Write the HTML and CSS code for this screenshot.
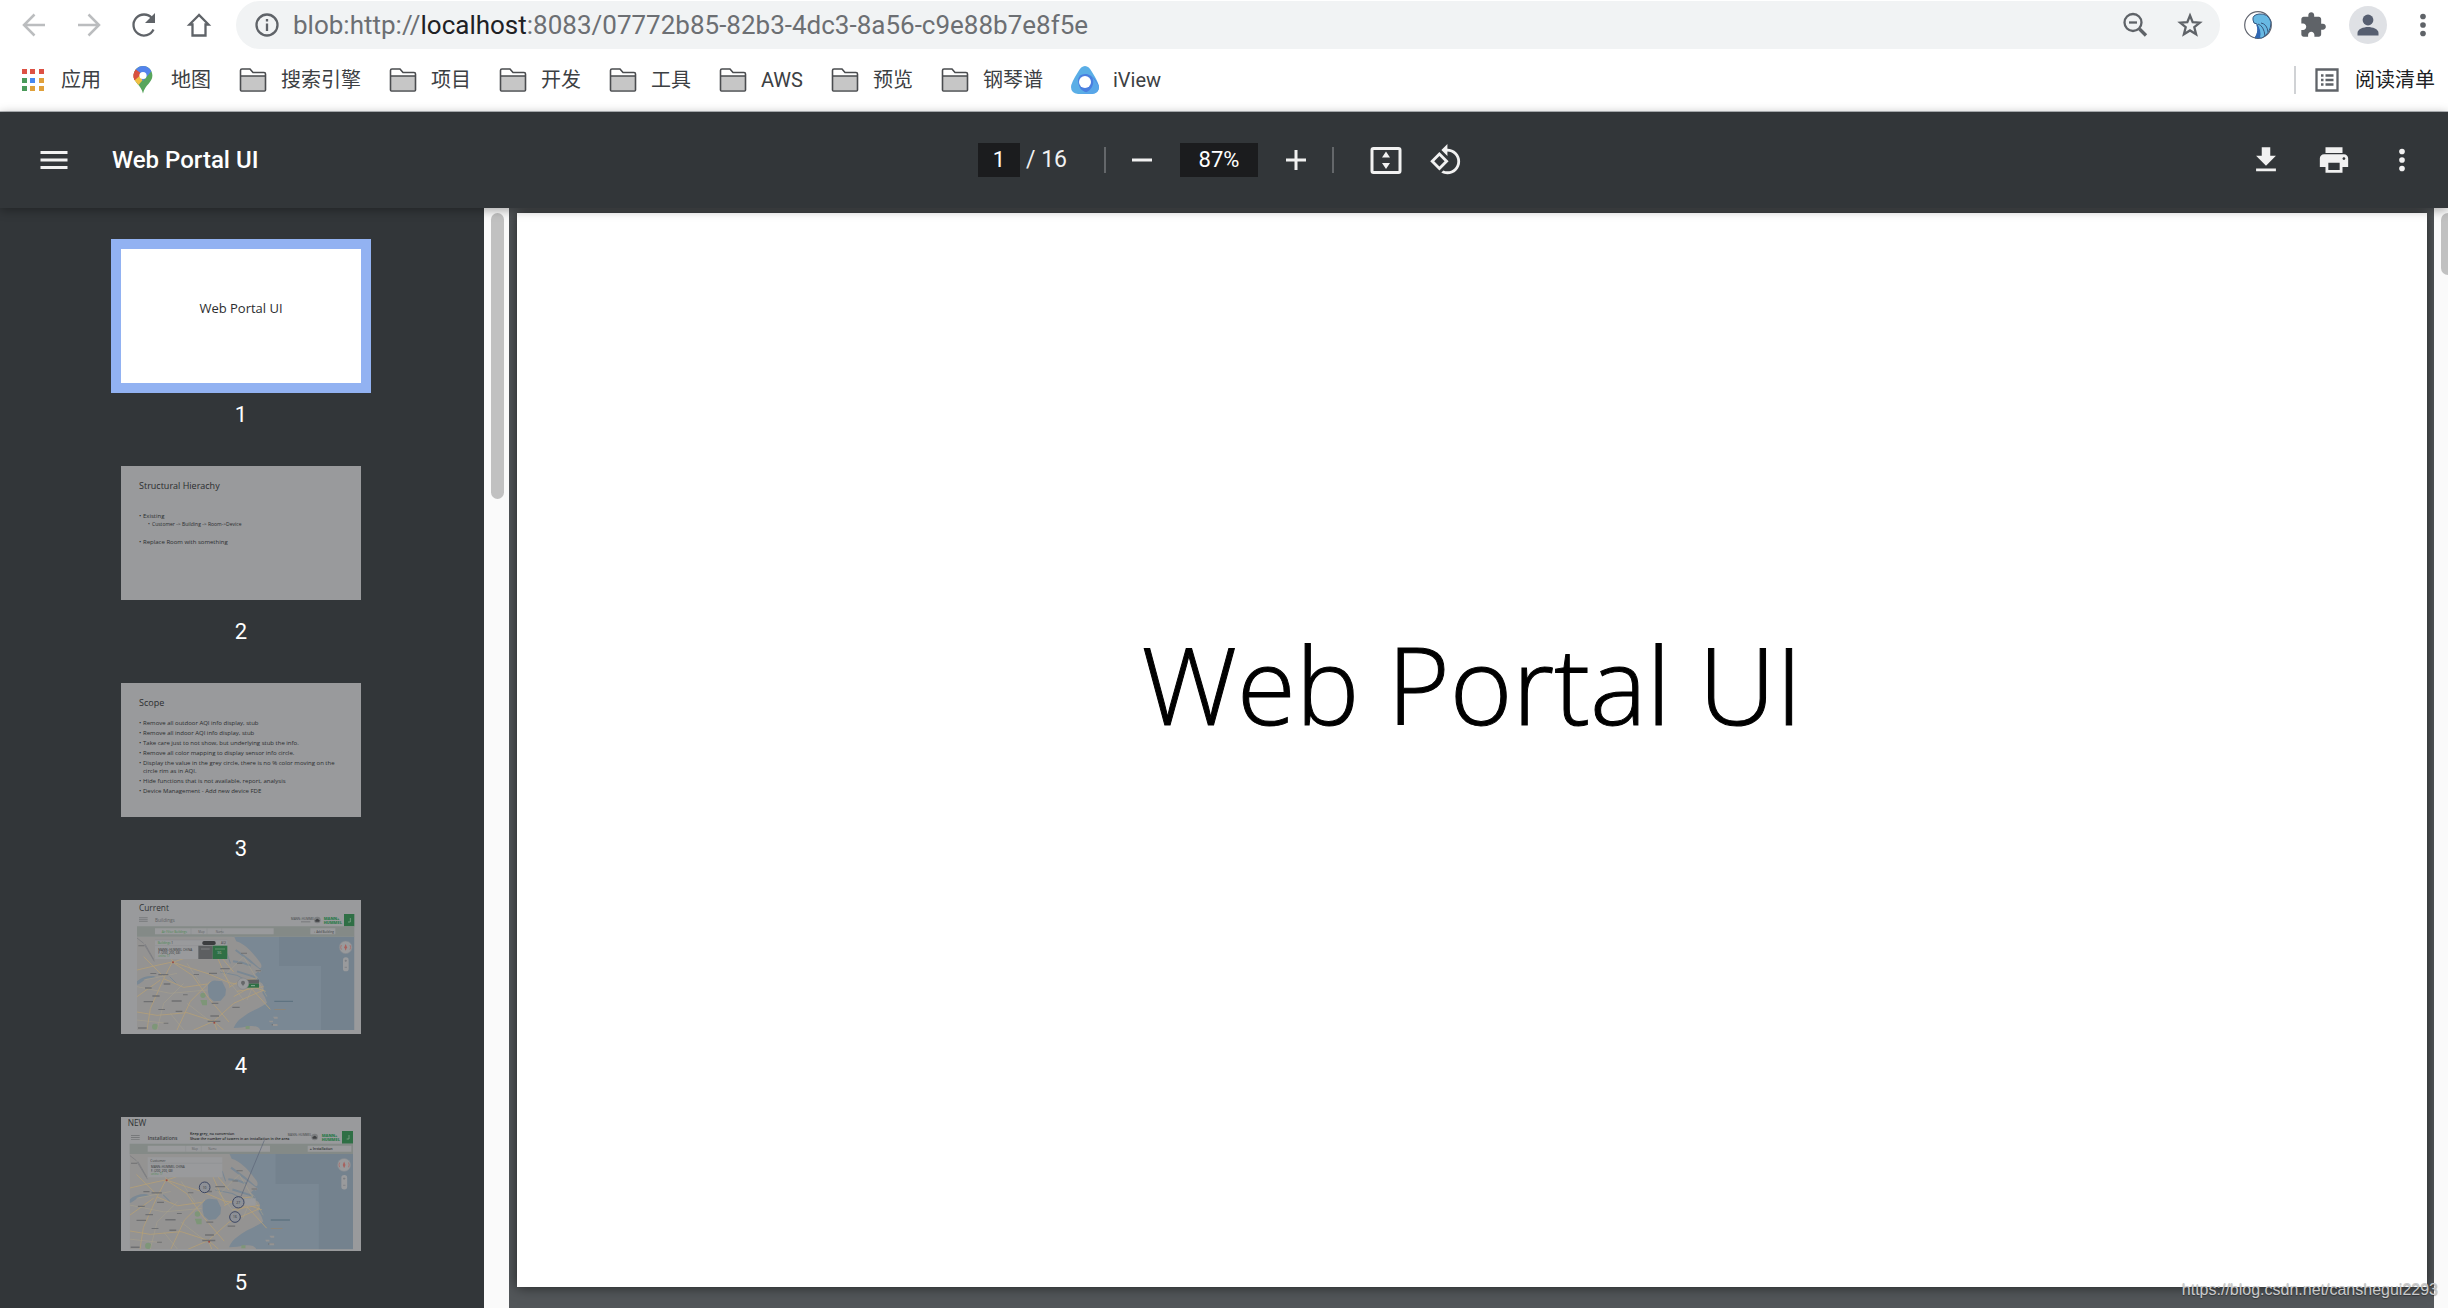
FILE: index.html
```html
<!DOCTYPE html>
<html lang="zh-CN">
<head>
<meta charset="utf-8">
<title>Web Portal UI</title>
<link rel="stylesheet" href="styles.css">
</head>
<body>
<svg class="defs" aria-hidden="true">
  <defs>
    <symbol id="folder" viewBox="0 0 28 28">
      <path d="M1.500 24V4.500q0-1.500 1.500-1.500H11l3 3.500H25q1.500 0 1.500 1.500V24q0 1-1 1h-23q-1 0-1-1z" fill="#fff"/>
      <path d="M2 10h24v14H2z" fill="#c6c6c6"/>
      <path d="M1.500 24V4.500q0-1.500 1.500-1.500H11l3 3.500H25q1.500 0 1.500 1.500V24q0 1-1 1h-23q-1 0-1-1zM1.500 10h25" fill="none" stroke="#4a4c4f" stroke-width="1.600"/>
    </symbol>
    <symbol id="dots" viewBox="0 0 24 24">
      <circle cx="12" cy="6" r="2"/><circle cx="12" cy="12" r="2"/><circle cx="12" cy="18" r="2"/>
    </symbol>
    <!-- Map of the Shanghai area used on several slides -->
    <symbol id="map" viewBox="0 0 652 280" preserveAspectRatio="none">
      <rect width="652" height="280" fill="#949392"/>
      <path d="M285 0H652V280H370q-6-14-30-12-28 6-50 6 8-20 24-30 20-16 34-22 30-14 42-24-6-20-14-30 10-16-4-34l-18-22q10-6 14-14 10-8 2-20-20-26-32-38-20-20-40-26-8-16-13-34z" fill="#7a8894"/>
      <path d="M552 88V280H652V0H426v88z" fill="#74828e"/>
      <path d="M213 146q10-18 26-14l16 2 6 12 6 12-2 18-14 16-20 2-14-12-4-16z" fill="#7a8894"/>
      <path d="M0 134q20-18 50-16l8 4-30 4-22 16-6 2z" fill="#7a8894"/>
      <path d="M376 100l-60-22-28-4M390 146l-40-26-50-16M296 40l40 30 40 36" fill="none" stroke="#7a8894" stroke-width="6"/>
      <path d="M250 106l50 10 30 16 46 2M98 120l20 20M270 50l10 30" fill="none" stroke="#7a8894" stroke-width="3"/>
      <path d="M344 80l30 22-6 6-28-18z" fill="#949392"/>
      <g fill="#7e9678">
        <circle cx="198" cy="176" r="8"/><circle cx="54" cy="270" r="9"/><path d="M190 190h20v16h-14zM326 268h12v9h-12z"/>
      </g>
      <g fill="none" stroke="#b39f78" stroke-width="2.500">
        <path d="M0 100l60-14 46-10 60 20 50 16 60 26 70 12 40 14M106 76l-26 50-40 90-10 64M106 76l60 40 50 70 60 70M0 226l60 10 90-8 80 26 60-54 90-40M80 126l60 26 70-10M170 280l60-26 10 26M276 152l34-20 46-6M340 152l60 66M300 164l80-14M290 180l60-34M60 10l50 66 70-24 60-6 50 60M0 180l70-50M120 280l40-86 60-60M230 254l30 26M20 60l60 60M240 60l40 90"/>
      </g>
      <g fill="none" stroke="#aaa28c" stroke-width="1.500">
        <path d="M0 150l100 20 110-10M60 280l20-80 60-60M150 200l70 54M20 130l100-20M260 120l60-60M320 60l70 120M100 230l40 50M0 250l90 10M250 100l70 90M330 190l30-70M150 80l40 60"/>
      </g>
      <path d="M0 4l20 16M24 22l26 46M22 24l30 50" stroke="#77797e" stroke-width="2" fill="none"/>
      <g fill="#6f7072">
        <path d="M4 26h18v3H4zM40 109h18v3H40zM64 112h30v4H64zM80 140h20v4H80zM24 152h20v4H24zM46 176h22v4H46zM20 193h28v4H20zM104 191h30v4h-30zM138 173h14v3h-14zM64 217h20v3H64zM116 222h20v4h-20zM80 258h14v3H80zM170 112h16v3h-16zM250 94h28v4h-28zM300 78h16v3h-16zM312 48h18v3h-18zM356 101h16v3h-16zM220 236h26v4h-26zM216 108h24v4h-24zM224 198h20v4h-20zM212 252h38v4h-38zM286 210h22v4h-22zM404 263h18v3h-18zM3 272h26v4H3z"/>
      </g>
      <path d="M412 192h56v4h-56z" fill="#5f7381"/><path d="M412 217h34v3h-34z" fill="#8c8579"/>
      <path d="M408 240h14v6h-10zM396 252h12v5h-10zM408 262h14v6h-14z" fill="#949392"/>
      <circle cx="108" cy="77" r="3" fill="#9a4a43"/><circle cx="232" cy="258" r="3" fill="#9a4a43"/>
      <circle cx="626" cy="32" r="19" fill="#999a9c" stroke="#858a90" stroke-width="2"/>
      <path d="M626 22l4 10-4 10-4-10z" fill="#a8625e"/><path d="M613 25q-4 7 0 14M639 25q4 7 0 14" stroke="#a8625e" stroke-width="2" fill="none"/>
      <rect x="618" y="62" width="17" height="42" rx="8" fill="#999a9c"/>
      <path d="M623 72h7M626 69v7M623 92h7" stroke="#77797e" stroke-width="2"/>
    </symbol>
  </defs>
</svg>

<header class="browser">
  <div class="address-row">
    <nav class="nav-buttons" aria-label="导航">
      <button class="icon-btn" aria-label="后退"><svg class="i28 faded" viewBox="0 0 28 28"><path d="M25 14H4M14.500 3.500L4 14l10.500 10.500"/></svg></button>
      <button class="icon-btn" aria-label="前进"><svg class="i28 faded" viewBox="0 0 28 28"><path d="M3 14h21M13.500 3.500L24 14 13.500 24.500"/></svg></button>
      <button class="icon-btn" aria-label="重新加载"><svg class="i28 line" viewBox="0 0 28 28"><path d="M23.500 18.500A10.500 10.500 0 1 1 22 7.200" /><path class="solid" d="M25 2v10H15z"/></svg></button>
      <button class="icon-btn" aria-label="主页"><svg class="i28 line" viewBox="0 0 28 28"><path d="M14 4L4.500 13.500H7.500V24.500H20.500V13.500H23.500z"/></svg></button>
    </nav>
    <div class="omnibox">
      <svg class="i28 line" viewBox="0 0 28 28"><circle cx="14" cy="14" r="10.500"/><path d="M14 12.500v7.500M14 8v2.600"/></svg>
      <div class="url" role="textbox" aria-label="地址">blob:http://<b>localhost</b>:8083/07772b85-82b3-4dc3-8a56-c9e88b7e8f5e</div>
      <button class="icon-btn" aria-label="缩放"><svg class="i28 line" viewBox="0 0 28 28"><circle cx="12" cy="11.500" r="8.500"/><path d="M8 11.500h8"/><path class="thick" d="M18.500 18l6.500 6.500"/></svg></button>
      <button class="icon-btn" aria-label="添加书签"><svg class="i28 line" viewBox="0 0 28 28"><path d="M14 4.500l2.700 6.600 7.100.5-5.500 4.600 1.800 7L14 19.400 7.900 23.200l1.800-7-5.500-4.600 7.100-.5z"/></svg></button>
    </div>
    <div class="extensions">
      <button class="icon-btn" aria-label="扩展程序"><svg class="i28" viewBox="0 0 28 28"><circle cx="14" cy="14" r="13.300" fill="#fff" stroke="#61656f" stroke-width="1.200"/><path d="M9 9Q8 4 15 3q9-1 12 8 0 11-9 16l-7 0q5-8 2-14-4 0-4-4z" fill="#68b9e3" stroke="#35577e"/><path d="M12 13q6 5 4 14l-5 0q4-7 1-14z" fill="#2f68b4"/><path d="M14 13q6 2 7 12M17 12q6 1 7 9" fill="none" stroke="#35577e"/></svg></button>
      <button class="icon-btn" aria-label="扩展"><svg class="i28 fill" viewBox="0 0 24 24"><path d="M20.500 11H19V7c0-1.100-.9-2-2-2h-4V3.500C13 2.120 11.880 1 10.500 1S8 2.120 8 3.500V5H4c-1.100 0-1.990.9-1.990 2v3.800H3.500c1.490 0 2.700 1.210 2.700 2.700s-1.210 2.700-2.700 2.700H2V20c0 1.100.9 2 2 2h3.800v-1.500c0-1.490 1.210-2.700 2.700-2.700 1.490 0 2.700 1.210 2.700 2.700V22H17c1.100 0 2-.9 2-2v-4h1.500c1.380 0 2.500-1.120 2.500-2.500S21.880 11 20.500 11z"/></svg></button>
      <button class="icon-btn" aria-label="用户"><svg class="avatar" viewBox="0 0 38 38"><circle cx="19" cy="19" r="19" fill="#dfe1e5"/><circle cx="19" cy="14" r="5.400" fill="#565e70"/><path d="M8.500 29.500v-2.500c0-4 6-6 10.500-6s10.500 2 10.500 6v2.500z" fill="#565e70"/></svg></button>
      <button class="icon-btn" aria-label="菜单"><svg class="i34 fill"><use href="#dots"/></svg></button>
    </div>
  </div>
  <nav class="bookmarks" aria-label="书签">
    <a href="#"><svg class="i28" viewBox="0 0 28 28"><g fill="#dd5144"><path d="M3 3h5v5H3zM11 3h5v5h-5zM20 3h5v5h-5z"/></g><path d="M3 12h5v5H3zM3 20h5v5H3z" fill="#4a9a5a"/><path d="M11 12h5v5h-5z" fill="#4688f1"/><path d="M20 12h5v5h-5zM11 20h5v5h-5zM20 20h5v5h-5z" fill="#e0a03a"/></svg>应用</a>
    <a href="#"><svg class="i28" viewBox="0 0 28 28"><path d="M14 0C8.500 0 4.600 4.400 4.600 9.600c0 7 7.400 9.400 9.400 17.800 2-8.400 9.400-10.800 9.400-17.800C23.400 4.400 19.500 0 14 0z" fill="#58a55c"/><path d="M4.600 9.600c0 4.200 2.400 6.600 4.900 9.300L18 9z" fill="#f1bf42"/><path d="M6.800 3.500C4 7 4 10.500 5.500 14.300L14 5z" fill="#d85140"/><path d="M6.800 3.500C11-1.500 19-1.200 22.400 5.300L14 15z" fill="#5383ec"/><path d="M6.800 3.500L13 8l-7.500 6.300C4 10.500 4 7 6.800 3.500z" fill="#d85140"/><circle cx="14" cy="9.500" r="3.600" fill="#fff"/></svg>地图</a>
    <a href="#"><svg class="i28"><use href="#folder"/></svg>搜索引擎</a>
    <a href="#"><svg class="i28"><use href="#folder"/></svg>项目</a>
    <a href="#"><svg class="i28"><use href="#folder"/></svg>开发</a>
    <a href="#"><svg class="i28"><use href="#folder"/></svg>工具</a>
    <a href="#"><svg class="i28"><use href="#folder"/></svg>AWS</a>
    <a href="#"><svg class="i28"><use href="#folder"/></svg>预览</a>
    <a href="#"><svg class="i28"><use href="#folder"/></svg>钢琴谱</a>
    <a href="#"><svg class="i28" viewBox="0 0 28 28"><path d="M14 0q4 0 7 6 7 11 7 15 0 6-7 7H7q-7-1-7-7 0-4 7-15 3-6 7-6z" fill="#5aaee6"/><path d="M7 14q1-7 9-6 7 2 11 10 2 8-4 9-10 1-14-5-2-4-2-8z" fill="#4a7fe0"/><path d="M28 20q0 7-7 8H7q10 0 14-7 3-6-1-12z" fill="#58a6e8"/><circle cx="14" cy="16" r="6" fill="#fff"/></svg>iView</a>
    <a href="#" class="reading-list"><svg class="i28 line" viewBox="0 0 28 28"><path d="M3.500 3.500h21v21h-21z"/><path d="M8 9.500h2.500M8 14h2.500M8 18.500h2.500M12.500 9.500h8M12.500 14h8M12.500 18.500h8"/></svg>阅读清单</a>
  </nav>
</header>

<div class="viewer">
  <header class="pdf-toolbar">
    <div class="group start">
      <button class="tool" aria-label="菜单"><svg class="i36" viewBox="0 0 24 24"><path d="M3 18h18v-2H3v2zm0-5h18v-2H3v2zm0-7v2h18V6H3z"/></svg></button>
      <h1>Web Portal UI</h1>
    </div>
    <div class="group middle">
      <input class="field page-no" value="1" aria-label="页码">
      <span class="total">/ 16</span>
      <span class="rule"></span>
      <button class="tool" aria-label="缩小"><svg class="i36" viewBox="0 0 36 36"><path d="M8 16.500h20v3H8z"/></svg></button>
      <input class="field zoom" value="87%" aria-label="缩放">
      <button class="tool" aria-label="放大"><svg class="i36" viewBox="0 0 36 36"><path d="M8 16.500h8.500V8h3v8.500H28v3h-8.500V28h-3v-8.500H8z"/></svg></button>
      <span class="rule"></span>
      <button class="tool fit" aria-label="适合页面"><svg class="i36" viewBox="0 0 36 36"><rect x="4" y="6.500" width="28" height="24" rx="1.500" fill="none" stroke="#f1f1f1" stroke-width="3"/><path d="M18 9.500l4 6h-8zM18 27l-4-6h8z"/></svg></button>
      <button class="tool rotate" aria-label="旋转"><svg class="i34" viewBox="0 0 24 24"><path d="M7.340 6.410L.86 12.900l6.490 6.480 6.490-6.480-6.500-6.490zM3.690 12.900l3.660-3.660L11 12.900l-3.660 3.660-3.650-3.660zm15.670-6.260C17.610 4.880 15.300 4 13 4V.76L8.760 5 13 9.240V6c1.790 0 3.580.68 4.950 2.050 2.730 2.730 2.730 7.170 0 9.900C16.580 19.320 14.790 20 13 20c-.97 0-1.940-.21-2.840-.61l-1.490 1.490C10.020 21.620 11.510 22 13 22c2.300 0 4.610-.88 6.360-2.640 3.520-3.510 3.520-9.210 0-12.720z"/></svg></button>
    </div>
    <div class="group end">
      <button class="tool" aria-label="下载"><svg class="i34" viewBox="0 0 24 24"><path d="M19 9h-4V3H9v6H5l7 7 7-7zM5 18v2h14v-2H5z"/></svg></button>
      <button class="tool" aria-label="打印"><svg class="i34" viewBox="0 0 24 24"><path d="M19 8H5c-1.660 0-3 1.340-3 3v6h4v4h12v-4h4v-6c0-1.660-1.340-3-3-3zm-3 11H8v-5h8v5zm3-7c-.55 0-1-.45-1-1s.45-1 1-1 1 .45 1 1-.45 1-1 1zm-1-9H6v4h12V3z"/></svg></button>
      <button class="tool" aria-label="更多"><svg class="i34"><use href="#dots"/></svg></button>
    </div>
  </header>

  <div class="workspace">
    <aside class="sidebar">
      <ol class="thumbs">
        <li><button class="thumb current"><span class="cover">Web Portal UI</span></button><span class="num">1</span></li>
        <li><div class="thumb dim structure"><h2>Structural Hierachy</h2>
          <ul><li>Existing<ul><li>Customer -&gt; Building -&gt; Room-&gt;Device</li></ul></li><li class="spaced">Replace Room with something</li></ul></div><span class="num">2</span></li>
        <li><div class="thumb dim scope"><h2>Scope</h2>
          <ul><li>Remove all outdoor AQI info display, stub</li><li>Remove all indoor AQI info display, stub</li><li>Take care just to not show, but underlying stub the info.</li><li>Remove all color mapping to display sensor info circle.</li><li>Display the value in the grey circle, there is no % color moving on the circle rim as in AQI.</li><li>Hide functions that is not available, report, analysis</li><li>Device Management - Add new device FDE</li></ul></div><span class="num">3</span></li>
        <li><div class="thumb dim">
          <svg class="slide" viewBox="0 0 720 402">
            <text x="54" y="32" font-size="25" fill="#303234">Current</text>
            <path d="M54 52h26v3H54zM54 58h26v3H54zM54 64h26v2H54z" fill="#77797b"/>
            <text x="102" y="65" font-size="14" fill="#606264">Buildings</text>
            <text x="510" y="59" font-size="9" fill="#404244">MANN+HUMMEL</text><path d="M540 64h28v3h-28z" fill="#77797b"/>
            <circle cx="589" cy="60" r="10" fill="#7c7e80"/><path d="M583 65v-4q6-10 12 0v4z" fill="#404244"/>
            <text class="brand" x="608" y="60">MANN+</text><text class="brand" x="608" y="71">HUMMEL</text>
            <path d="M669 42h31v37h-31z" fill="#2f6f45"/><path d="M688 54v12h-7" stroke="#8fae98" stroke-width="2" fill="none"/>
            <path d="M48 79h652v31H48z" fill="#848a87"/><path d="M102 85h356v18H102zM568 85h75v18h-75z" fill="#999a9c"/>
            <path d="M210 85v18M258 85v18M302 85v18" stroke="#848a87"/>
            <text x="122" y="98" font-size="9" fill="#4f8a55">Air Filter Buildings</text><text x="232" y="98" font-size="9" fill="#606264">Map</text><text x="284" y="98" font-size="9" fill="#606264">Name</text><text x="578" y="98" font-size="9" fill="#404244">+ Add Building</text>
            <use href="#map" x="48" y="110" width="652" height="280"/>
            <path d="M102 120h217v57H102z" fill="#999a9c"/>
            <text x="110" y="132" font-size="9" fill="#4f8a55">Buildings <tspan fill="#303234">1</tspan></text><rect x="244" y="123" width="40" height="12" rx="5" fill="#3b3d3f"/><text x="300" y="132" font-size="9" fill="#404244">AQI</text>
            <path d="M102 137h130M102 120h217" stroke="#87898b"/><path d="M232 137h43v40h-43z" fill="#5d5f61"/><path d="M275 137h44v40h-44z" fill="#2f6f45"/>
            <path d="M282 147h30" stroke="#63906f" stroke-width="3"/><path d="M240 147h26" stroke="#808284" stroke-width="3"/><text x="288" y="163" font-size="12" fill="#a0b5a5">36</text>
            <text x="112" y="152" font-size="9" fill="#303234">MANN+HUMMEL CHINA</text><text x="112" y="162" font-size="9" fill="#303234">F. (200, 200, 68)</text><text x="112" y="172" font-size="8" fill="#4f8a55">online 17</text>
            <path d="M378 239h36v12h-36z" fill="#5d5f61"/><path d="M378 251h36v12h-36z" fill="#2f6f45"/><path d="M390 257h12" stroke="#8fae98" stroke-width="3"/>
            <circle cx="366" cy="251" r="17" fill="#999a9c" stroke="#85878a" stroke-width="2"/><circle cx="366" cy="248" r="6" fill="#66686a"/><path d="M363 252h6l-3 7z" fill="#66686a"/>
          </svg></div><span class="num">4</span></li>
        <li><div class="thumb dim">
          <svg class="slide" viewBox="0 0 720 402">
            <text x="20" y="26" font-size="25" fill="#303234">NEW</text>
            <path d="M30 54h26v3H30zM30 60h26v3H30zM30 66h26v2H30z" fill="#77797b"/>
            <text x="80" y="69" font-size="15" font-weight="600" fill="#404244">Installations</text>
            <text x="207" y="54" font-size="11" font-weight="600" fill="#232527">Keep grey, no conversion</text>
            <text x="207" y="69" font-size="11" font-weight="600" fill="#232527">Show the number of towers in an installation in the area</text>
            <text x="500" y="56" font-size="9" fill="#404244">MANN+HUMMEL</text>
            <circle cx="581" cy="60" r="10" fill="#7c7e80"/><path d="M575 65v-4q6-10 12 0v4z" fill="#404244"/>
            <text class="brand" x="602" y="60">MANN+</text><text class="brand" x="602" y="71">HUMMEL</text>
            <path d="M663 42h33v38h-33z" fill="#2f6f45"/><path d="M684 54v12h-7" stroke="#8fae98" stroke-width="2" fill="none"/>
            <path d="M26 80h670v31H26z" fill="#848a87"/><path d="M80 86h367v18H80zM560 86h131v18H560z" fill="#999a9c"/>
            <path d="M194 86v18M241 86v18" stroke="#848a87"/><text x="212" y="99" font-size="9" fill="#606264">Map</text><text x="262" y="99" font-size="9" fill="#606264">Name</text><text x="566" y="99" font-size="11" font-weight="600" fill="#303234">+ Installation</text>
            <use href="#map" x="26" y="111" width="670" height="286"/>
            <path d="M80 121h224v60H80z" fill="#999a9c"/><path d="M86 139h218" stroke="#87898b"/>
            <text x="88" y="134" font-size="10" fill="#404244">Customer</text><text x="90" y="154" font-size="9" fill="#303234">MANN+HUMMEL CHINA</text><text x="90" y="164" font-size="9" fill="#303234">F. (200, 200, 68)</text><text x="90" y="174" font-size="8" fill="#4f8a55">online 17</text>
            <path d="M370 244h34v22h-34z" fill="#999a9c"/><path d="M430 70l-70 168" stroke="#5c6579" stroke-width="2"/>
            <g fill="#8d9096" stroke="#3d4763" stroke-width="3"><circle cx="251" cy="211" r="16"/><circle cx="352" cy="256" r="17"/><circle cx="342" cy="300" r="16"/></g>
            <g font-size="10" fill="#303234"><text x="245" y="215">10</text><text x="346" y="260">27</text><text x="336" y="304">16</text></g>
          </svg></div><span class="num">5</span></li>
      </ol>
      <div class="scroll-track"><div class="scroll-thumb"></div></div>
    </aside>
    <main class="canvas">
      <section class="page"><p class="slide-title">Web Portal UI</p></section>
    </main>
    <div class="scroll-track doc"><div class="scroll-thumb short"></div></div>
  </div>
</div>
<span class="watermark">https://blog.csdn.net/canshegui2293</span>
</body>
</html>
```
FILE: styles.css
```css
* { box-sizing: border-box; }

body {
  margin: 0;
  height: 100vh;
  display: flex;
  flex-direction: column;
  overflow: hidden;
  position: relative;
  background: #fff;
  font-family: Roboto, "Noto Sans CJK SC", sans-serif;
}

button {
  border: 0;
  padding: 0;
  background: none;
  font: inherit;
  color: inherit;
}

h1, h2, p, ol, ul { margin: 0; padding: 0; }
ol, ul { list-style: none; }
svg { display: block; flex: none; }

.defs { position: absolute; width: 0; height: 0; }
.i28 { width: 28px; height: 28px; }
.i34 { width: 34px; height: 34px; }
.i36 { width: 36px; height: 36px; }

/* Browser chrome */
.browser {
  flex: none;
  border-bottom: 1px solid #b9bcbf;
}

.address-row {
  display: flex;
  align-items: center;
  height: 50px;
  padding: 0 11px 0 20px;
}

.nav-buttons, .extensions { display: flex; gap: 27px; }
.nav-buttons { margin-right: 23px; }
.extensions { margin-left: 24px; }

.icon-btn {
  display: flex;
  align-items: center;
  justify-content: center;
  width: 28px;
  height: 28px;
}

.avatar { width: 38px; height: 38px; }

.faded { fill: none; stroke: #bbbdbf; stroke-width: 2.500; }
.line { fill: none; stroke: #5f6368; stroke-width: 2.300; }
.line .thick { stroke-width: 3.300; }
.line .solid { fill: #5f6368; stroke: none; }
.fill { fill: #5f6368; }

.omnibox {
  flex: 1;
  display: flex;
  align-items: center;
  gap: 27px;
  height: 48px;
  padding: 0 16px 0 17px;
  border-radius: 24px;
  background: #f1f3f4;
}

.url {
  flex: 1;
  margin-left: -15px;
  font-size: 26px;
  line-height: 32px;
  color: #6c6f73;
  white-space: nowrap;
}

.url b { font-weight: 400; color: #202124; }

.bookmarks {
  display: flex;
  align-items: center;
  gap: 28px;
  height: 61px;
  padding: 0 13px 2px 19px;
}

.bookmarks a {
  display: flex;
  align-items: center;
  gap: 14px;
  font-size: 20px;
  line-height: 28px;
  color: #3c4043;
  text-decoration: none;
}

.bookmarks .reading-list {
  margin-left: auto;
  padding-left: 17px;
  border-left: 2px solid #d0d2d5;
  color: #202124;
}

/* PDF viewer */
.viewer {
  flex: 1;
  min-height: 0;
  display: flex;
  flex-direction: column;
  background: #525659;
}

.pdf-toolbar {
  flex: none;
  display: grid;
  grid-template-columns: 1fr auto 1fr;
  align-items: center;
  height: 96px;
  padding: 0 28px 0 36px;
  background: #323639;
  color: #f1f1f1;
  box-shadow: 0 2px 10px rgba(0, 0, 0, .35);
  z-index: 1;
}

.group { display: flex; align-items: center; }
.start { gap: 40px; }
.end { justify-content: flex-end; gap: 32px; }
.middle { padding-right: 14px; }

.tool {
  display: flex;
  align-items: center;
  justify-content: center;
  width: 36px;
  height: 36px;
  fill: #f1f1f1;
}

.fit { margin-left: 16px; }
.rotate { margin-left: 24px; }

h1 {
  font-size: 24px;
  line-height: 32px;
  font-weight: 500;
  color: #fff;
}

.field {
  height: 34px;
  padding: 0;
  border: 0;
  background: #1b1c1e;
  color: #fff;
  font: 22px/34px Roboto, sans-serif;
  text-align: center;
}

.page-no { width: 42px; }
.zoom { width: 78px; margin: 0 20px; }

.total {
  width: 60px;
  margin-left: 6px;
  font-size: 23px;
  line-height: 34px;
  white-space: nowrap;
}

.rule {
  width: 2px;
  height: 26px;
  margin: 0 18px;
  background: #64676a;
}

.workspace {
  flex: 1;
  min-height: 0;
  display: flex;
}

.sidebar {
  flex: none;
  display: flex;
  background: #323639;
}

.thumbs {
  width: 484px;
  padding: 41px 2px 0 0;
  overflow: hidden;
}

.thumbs > li {
  display: flex;
  flex-direction: column;
  align-items: center;
  gap: 18px;
  margin-bottom: 37px;
}

.thumb {
  flex: none;
  width: 240px;
  height: 134px;
  overflow: hidden;
  color: #2b2d2f;
  background: #fff;
  text-align: left;
  font-family: "Open Sans", sans-serif;
}

.thumbs .dim { background: #999a9c; }
.current { box-shadow: 0 0 0 10px #92b2f2; overflow: visible; }

.cover {
  display: block;
  padding-bottom: 16px;
  text-align: center;
  font: 400 13px/18px "Open Sans", sans-serif;
}

.num {
  font-size: 22px;
  line-height: 28px;
  color: #fff;
}

.thumb h2 { font-size: 9px; line-height: 12px; font-weight: 400; }
.structure, .scope { padding: 14px 16px 0 18px; }
.thumb ul { font-size: 6px; line-height: 8px; }
.thumb li::before { content: "•"; float: left; margin-left: -4px; }
.thumb li { padding-left: 4px; }
.structure > ul { margin-top: 20px; }
.structure ul ul { padding-left: 5px; font-size: 5px; }
.structure .spaced { margin-top: 10px; }
.scope > ul { display: flex; flex-direction: column; gap: 2px; margin-top: 10px; }

.slide {
  width: 240px;
  height: 134px;
  font-family: "Open Sans", sans-serif;
}

.brand { font: 800 12px "Open Sans", sans-serif; fill: #2f7a4c; }

.scroll-track {
  flex: none;
  width: 25px;
  padding: 5px 5px 0 7px;
  background: #fafafa;
}

.scroll-thumb {
  height: 286px;
  border-radius: 7px;
  background: #c1c1c1;
}

.canvas {
  flex: 1;
  min-width: 0;
  padding: 5px 7px 0 8px;
  overflow: hidden;
}

.page {
  display: flex;
  align-items: center;
  justify-content: center;
  aspect-ratio: 1910 / 1074;
  padding-bottom: 132px;
  background: #fff;
  box-shadow: 0 0 12px rgba(0, 0, 0, .6);
}

.slide-title {
  font: 300 107px/128px "Open Sans", sans-serif;
  -webkit-text-stroke: 1px #000;
  color: #000;
  white-space: nowrap;
}

.doc { width: 14px; padding-right: 0; }
.short { height: 62px; border-radius: 7px 0 0 7px; }

.watermark {
  position: absolute;
  right: 10px;
  bottom: 8px;
  font: 16px/20px "Liberation Sans", sans-serif;
  color: #c9cacb;
  text-shadow: 0 1px 1px rgba(0, 0, 0, .35);
}
```
